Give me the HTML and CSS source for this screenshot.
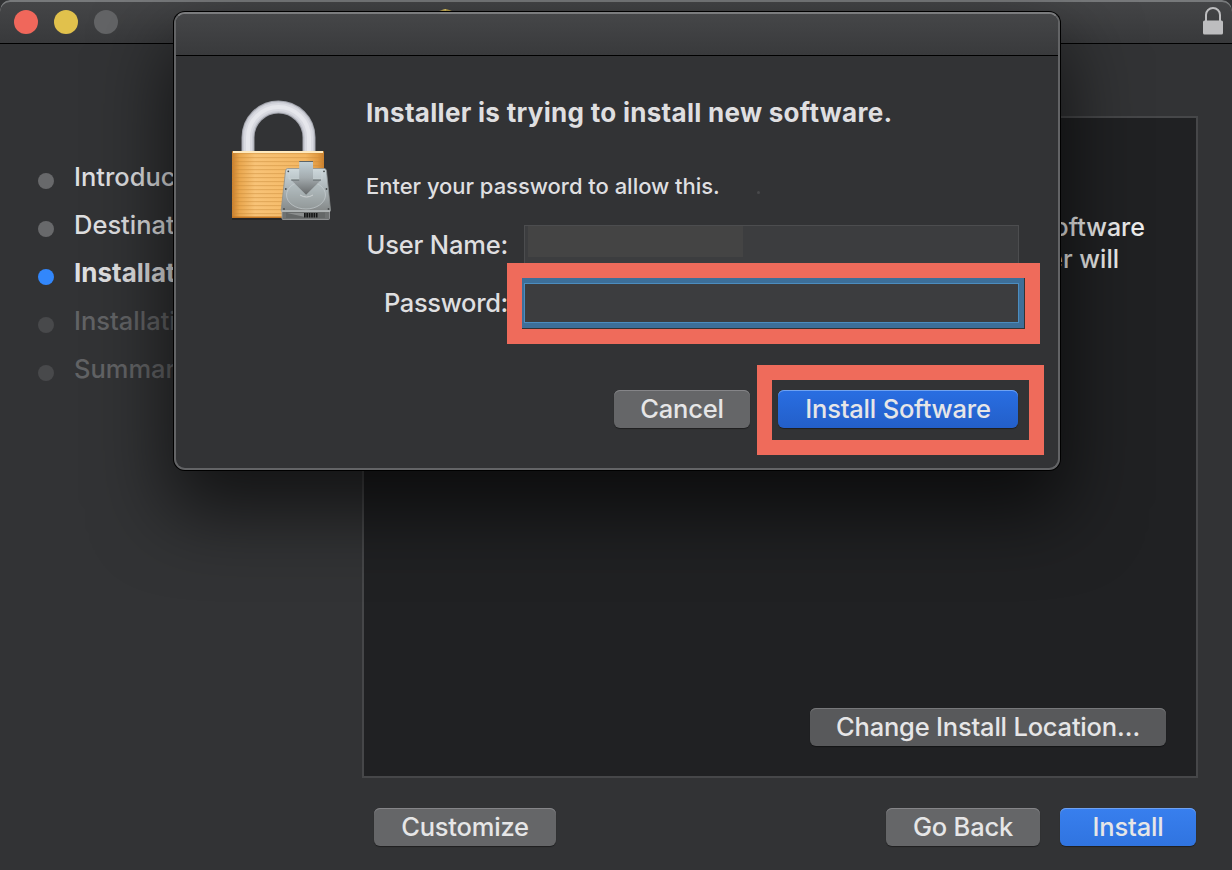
FILE: index.html
```html
<!DOCTYPE html>
<html lang="en">
<head>
<meta charset="utf-8">
<title>Installer</title>
<link rel="stylesheet" href="styles.css">
</head>
<body>
<div class="window">
  <header class="titlebar">
    <div class="lights"><i class="light close"></i><i class="light minimize"></i><i class="light zoom"></i></div>
    <svg class="pkg" width="16" height="4" viewBox="0 0 16 4"><path d="M0 3.600 4 2 8 1l3.400 1L15 3.600z" fill="#b9a04a"/><path d="M4 2 8 1v1.600z" fill="#e5cf72"/></svg>
    <svg class="title-lock" width="22" height="30" viewBox="0 0 22 30"><path d="M4 16V9a7 7 0 0 1 14 0v7" fill="none" stroke="#bdbdbf" stroke-width="2"/><rect x="1" y="14.500" width="20" height="14" rx="1.500" fill="#bdbdbf"/></svg>
  </header>
  <main class="content">
    <ol class="steps">
      <li class="step"><i class="dot"></i><span>Introduction</span></li>
      <li class="step"><i class="dot"></i><span>Destination Select</span></li>
      <li class="step current"><i class="dot"></i><span>Installation Type</span></li>
      <li class="step pending"><i class="dot"></i><span>Installation</span></li>
      <li class="step pending"><i class="dot"></i><span>Summary</span></li>
    </ol>
    <section class="panel">
      <p class="info"><span>software</span><span class="second">Installer will</span></p>
      <button class="btn dim change"><span>Change Install Location…</span></button>
    </section>
  </main>
  <footer class="actions">
    <button class="btn customize"><span>Customize</span></button>
    <button class="btn back"><span>Go Back</span></button>
    <button class="btn primary install"><span>Install</span></button>
  </footer>
</div>

<div class="dialog">
  <div class="dialog-bar"></div>
  <div class="dialog-body">
    <svg class="auth-icon" width="104" height="126" viewBox="0 0 104 126">
      <defs>
        <linearGradient id="gold" x1="0" x2="1"><stop offset="0" stop-color="#c97f2c"/><stop offset=".08" stop-color="#e9a64d"/><stop offset=".25" stop-color="#f8c377"/><stop offset=".8" stop-color="#f4b762"/><stop offset=".93" stop-color="#e29a42"/><stop offset="1" stop-color="#c97f2c"/></linearGradient>
        <linearGradient id="drive" x1="0" y1="0" x2="0" y2="1"><stop offset="0" stop-color="#cdd8dc"/><stop offset=".5" stop-color="#a9b2b5"/><stop offset="1" stop-color="#838787"/></linearGradient>
        <linearGradient id="arrow" x1="0" y1="0" x2="0" y2="1"><stop offset="0" stop-color="#c3d2d8"/><stop offset=".5" stop-color="#a3abae"/><stop offset="1" stop-color="#66696a"/></linearGradient>
        <pattern id="grooves" width="10" height="4" patternUnits="userSpaceOnUse"><rect y="2" width="10" height="1.200" fill="#c9893a" opacity=".42"/></pattern>
      </defs>
      <path d="M17 54V38.500a30.500 30.500 0 0 1 61 0v15.500" fill="none" stroke="#a2a4ac" stroke-width="13"/>
      <path d="M17 54V38.500a30.500 30.500 0 0 1 61 0v15.500" fill="none" stroke="#c9cbd3" stroke-width="11"/>
      <path d="M17 54V38.500a30.500 30.500 0 0 1 61 0v15.500" fill="none" stroke="#d9dae1" stroke-width="8"/>
      <path d="M17 54V38.500a30.500 30.500 0 0 1 61 0v15.500" fill="none" stroke="#e6e7ec" stroke-width="4"/>
      <rect x="1" y="119" width="93" height="2" fill="#1f2021" opacity=".7"/>
      <rect x="1" y="52" width="92" height="67" rx="1" fill="url(#gold)"/>
      <rect x="1" y="54" width="92" height="64" fill="url(#grooves)"/>
      <rect x="2" y="52" width="90" height="2" fill="#ffe9bd"/>
      <rect x="1" y="117.500" width="92" height="1.500" fill="#c27725"/>
      <path d="M51 112h47.500v7.500q0 1-1 1h-45.500q-1 0-1-1z" fill="#6f7272" stroke="#a0a2a3" stroke-width=".8"/>
      <path d="M54.500 72q.3-2.500 2-2.500h37q1.700 0 2 2.500l4 39q.2 1.500-1 1.500H51.200q-1.200 0-1-1.500z" fill="url(#drive)" stroke="#8b9090" stroke-width=".8"/>
      <path d="M50.500 112h48.500" stroke="#d5d9da" stroke-width="1"/>
      <rect x="55" y="113.500" width="39" height="5.500" fill="#646767"/>
      <path d="M56 114h18v4z" fill="#8a8d8d"/>
      <path d="M73 116.300h13.500" stroke="#151616" stroke-width="4.600" stroke-dasharray="1.600 .8"/>
      <ellipse cx="75" cy="96" rx="19.500" ry="14" fill="#b4bec1" fill-opacity=".25" stroke="#cdd4d6" stroke-width=".6"/>
      <path d="M58 71h33v9H58z" fill="none" stroke="#d0d8da" stroke-width=".5"/>
      <path d="M69 96q6.500 4 13 0" fill="none" stroke="#d0d4d5" stroke-width=".9"/>
      <g fill="#45494a"><circle cx="57.300" cy="72.300" r=".9"/><circle cx="93" cy="72.300" r=".9"/><circle cx="54.800" cy="90" r=".9"/><circle cx="95.500" cy="90" r=".9"/><circle cx="53" cy="110" r=".9"/><circle cx="97.500" cy="110" r=".9"/></g>
      <path d="M68.200 62H82v19h8L75.100 95.700 60.200 81h8z" fill="url(#arrow)"/>
      <path d="M68.200 62.500H82M60.200 81h8M82 81h8" stroke="#5d6466" stroke-width="1"/>
    </svg>
    <div class="auth">
      <h1 class="title"><span>Installer is trying to install new software.</span></h1>
      <p class="prompt"><span>Enter your password to allow this.</span><i class="speck"></i></p>
      <div class="field-row"><label><span>User Name:</span></label><div class="field user"><i class="redacted"></i></div></div>
      <div class="field-row pass-row"><label><span>Password:</span></label><div class="field password"></div></div>
      <div class="dialog-actions">
        <button class="btn cancel"><span>Cancel</span></button>
        <button class="btn primary deep confirm"><span>Install Software</span></button>
      </div>
    </div>
  </div>
  <div class="mark mark-field"></div>
  <div class="mark mark-button"></div>
</div>
</body>
</html>
```
FILE: styles.css
```css
* { box-sizing: border-box; }
body {
  margin: 0;
  width: 1232px;
  height: 870px;
  overflow: hidden;
  background: #323335;
  color: #dfdfe0;
  font: 450 25.500px/32px Inter, "Liberation Sans", sans-serif;
  position: relative;
}
h1, p, ol { margin: 0; padding: 0; }
.window { height: 870px; display: flex; flex-direction: column; border-radius: 10px 10px 0 0; overflow: hidden; }
.titlebar {
  height: 44px;
  flex: none;
  position: relative;
  display: flex;
  align-items: center;
  justify-content: space-between;
  padding: 0 8px 0 14px;
  background: linear-gradient(#454648, #38393b);
  border-bottom: 1px solid #000;
  box-shadow: inset 0 2px #77797b;
  border-radius: 10px 10px 0 0;
}
.lights { display: flex; gap: 16px; }
.light { width: 24px; height: 24px; border-radius: 50%; }
.close { background: #f0675b; }
.minimize { background: #e1c14c; }
.zoom { background: #636466; }
.pkg { position: absolute; left: 438px; top: 8px; }
.title-lock { display: block; margin-bottom: 1px; }
.content { display: flex; height: 734px; padding: 72px 34px 0 38px; }
.steps { list-style: none; width: 324px; flex: none; padding-top: 37px; }
.step { display: flex; align-items: center; gap: 20px; height: 48px; white-space: nowrap; }
.dot { width: 16px; height: 16px; flex: none; border-radius: 50%; background: #68696b; margin-top: 7px; }
.current { font-weight: 700; font-size: 26px; }
.current .dot { background: #3287fb; }
.pending { color: #626365; }
.pending .dot { background: #48494b; }
.panel {
  width: 836px;
  height: 662px;
  border: 2px solid #464749;
  background: #202123;
  display: flex;
  flex-direction: column;
  justify-content: space-between;
  padding: 93px 30px 30px 0;
}
.info { display: flex; flex-direction: column; align-items: flex-end; padding-right: 21px; color: #ededed; font-size: 25px; }
.second { margin-right: 26px; }
.actions { display: flex; padding: 30px 36px 0 374px; }
.btn {
  height: 38px;
  padding: 0;
  border: 0;
  border-radius: 6px;
  display: flex;
  justify-content: center;
  align-items: center;
  background: #656668;
  color: #e6e6e7;
  font: inherit;
  letter-spacing: -.200px;
  white-space: nowrap;
  box-shadow: inset 0 1px #858588, 0 1px 1px rgba(0, 0, 0, .4);
}
.dim { background: #58595b; box-shadow: inset 0 1px #77787a, 0 1px 1px rgba(0, 0, 0, .4); }
.primary { background: linear-gradient(#387fee, #3074e0); box-shadow: inset 0 1px #6fa2f2, 0 1px 1px rgba(0, 0, 0, .4); }
.deep { background: linear-gradient(#296ee2, #235fc9); }
.change { width: 356px; align-self: flex-end; }
.customize { width: 182px; }
.back { width: 154px; margin-left: auto; }
.install { width: 136px; margin-left: 20px; }

.dialog {
  position: absolute;
  left: 174px;
  top: 12px;
  width: 886px;
  height: 458px;
  border: 2px solid #636466;
  border-top-color: #7b7c7e;
  border-radius: 11px;
  background: #323335;
  box-shadow: 0 0 0 1px #000, 0 36px 76px 6px rgba(0, 0, 0, .62);
}
.dialog-bar { height: 42px; border-bottom: 1px solid #000; background: linear-gradient(#454648, #393a3c); border-radius: 9px 9px 0 0; }
.dialog-body { display: flex; padding: 41px 40px 0 55px; }
.auth-icon { flex: none; margin-top: 2px; }
.auth { width: 652px; margin-left: 31px; }
.title { font: inherit; font-weight: 700; font-size: 26px; letter-spacing: .290px; white-space: nowrap; }
.prompt { font-size: 22px; letter-spacing: -.030px; margin-top: 41px; display: flex; align-items: center; }
.speck { width: 3px; height: 3px; margin: 12px 0 0 37px; border-radius: 50%; background: #48494b; }
.field-row { display: flex; height: 42px; margin-top: 23px; }
.field-row label { width: 142px; flex: none; display: flex; justify-content: flex-end; padding-top: 4px; letter-spacing: -.200px; white-space: nowrap; }
.pass-row label { letter-spacing: -.350px; }
.field { width: 495px; flex: none; height: 40px; margin-left: 16px; background: #3c3d3f; border: 1px solid #4c4d4f; }
.redacted { display: block; width: 215px; height: 31px; margin: 0 0 0 3px; background: #444; }
.pass-row { margin-top: 16px; }
.password { border-color: #4b8dc0; box-shadow: 0 0 0 5px #3d6f99; }
.dialog-actions { display: flex; justify-content: flex-end; gap: 28px; margin-top: 65px; }
.cancel { width: 136px; }
.confirm { width: 240px; }
.mark { position: absolute; border: 15px solid #ef6b5b; }
.mark-field { left: 330.500px; top: 248.500px; width: 533.500px; height: 81px; }
.mark-button { left: 581px; top: 350.500px; width: 286.500px; height: 90px; }
```
